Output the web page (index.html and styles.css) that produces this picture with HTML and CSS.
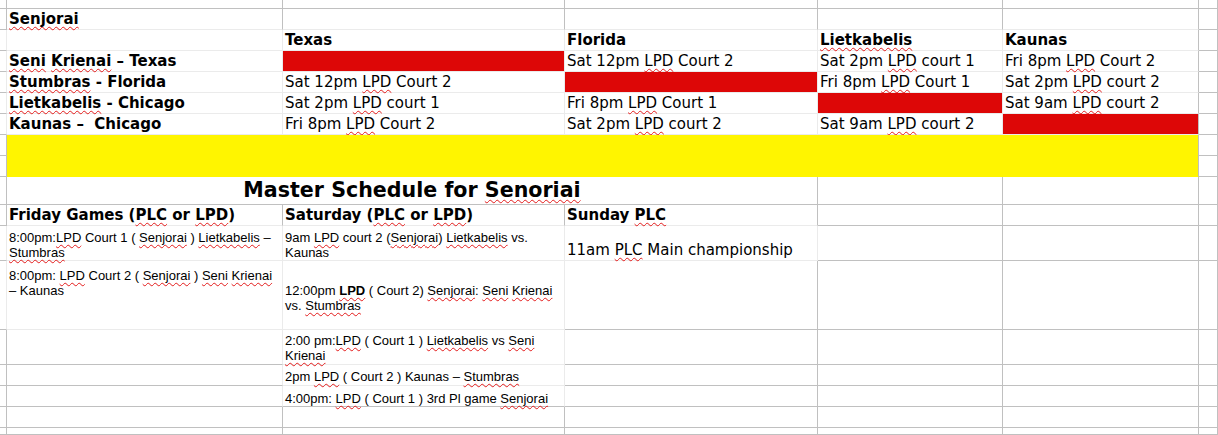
FILE: index.html
```html
<!DOCTYPE html>
<html>
<head>
<meta charset="utf-8">
<link rel="stylesheet" href="styles.css">
</head>
<body>
<div class="sheet">
  <!-- r0 -->
  <div class="c"></div><div class="c"></div><div class="c"></div><div class="c"></div><div class="c"></div><div class="c"></div><div class="c"></div>
  <!-- r1 -->
  <div class="c"></div>
  <div class="c lb b"><span class="sp">Senjorai</span></div>
  <div class="c lb"></div><div class="c lb"></div><div class="c lb"></div><div class="c lb"></div>
  <div class="c"></div>
  <!-- r2 -->
  <div class="c lr"></div>
  <div class="c lr lb"></div>
  <div class="c lr lb b">Texas</div>
  <div class="c lr lb b">Florida</div>
  <div class="c lr lb b"><span class="sp">Lietkabelis</span></div>
  <div class="c lb b">Kaunas</div>
  <div class="c"></div>
  <!-- r3 -->
  <div class="c lr"></div>
  <div class="c lr lb b"><span class="sp">Seni</span> <span class="sp">Krienai</span> – Texas</div>
  <div class="c lr lb red"></div>
  <div class="c lr lb">Sat 12pm <span class="sp">LPD</span> Court 2</div>
  <div class="c lr lb">Sat 2pm <span class="sp">LPD</span> court 1</div>
  <div class="c lb">Fri 8pm <span class="sp">LPD</span> Court 2</div>
  <div class="c"></div>
  <!-- r4 -->
  <div class="c lr"></div>
  <div class="c lr lb b"><span class="sp">Stumbras</span> - Florida</div>
  <div class="c lr lb">Sat 12pm <span class="sp">LPD</span> Court 2</div>
  <div class="c lr lb red"></div>
  <div class="c lr lb">Fri 8pm <span class="sp">LPD</span> Court 1</div>
  <div class="c lb">Sat 2pm <span class="sp">LPD</span> court 2</div>
  <div class="c"></div>
  <!-- r5 -->
  <div class="c lr"></div>
  <div class="c lr lb b"><span class="sp">Lietkabelis</span> - Chicago</div>
  <div class="c lr lb">Sat 2pm <span class="sp">LPD</span> court 1</div>
  <div class="c lr lb">Fri 8pm <span class="sp">LPD</span> Court 1</div>
  <div class="c lr lb red"></div>
  <div class="c lb">Sat 9am <span class="sp">LPD</span> court 2</div>
  <div class="c"></div>
  <!-- r6 -->
  <div class="c lr"></div>
  <div class="c lr lb b">Kaunas –&nbsp; Chicago</div>
  <div class="c lr lb">Fri 8pm <span class="sp">LPD</span> Court 2</div>
  <div class="c lr lb">Sat 2pm <span class="sp">LPD</span> court 2</div>
  <div class="c lr lb">Sat 9am <span class="sp">LPD</span> court 2</div>
  <div class="c lb red"></div>
  <div class="c"></div>
  <!-- r7 / r8 -->
  <div class="c"></div>
  <div class="c yellow"></div>
  <div class="c"></div>
  <div class="c"></div>
  <div class="c"></div>
  <!-- r9 -->
  <div class="c"></div>
  <div class="c title"><span>Master Schedule for <span class="sp">Senoriai</span></span></div>
  <div class="c"></div>
  <div class="c"></div>
  <div class="c"></div>
  <!-- r10 -->
  <div class="c"></div>
  <div class="c lb b">Friday Games (<span class="sp">PLC</span> or <span class="sp">LPD</span>)</div>
  <div class="c lb b">Saturday (<span class="sp">PLC</span> or <span class="sp">LPD</span>)</div>
  <div class="c lb b">Sunday <span class="sp">PLC</span></div>
  <div class="c"></div><div class="c"></div><div class="c"></div>
  <!-- r11 -->
  <div class="c lr"></div>
  <div class="c lr lb sm p4">8:00pm:<span class="sp">LPD</span> Court 1 ( <span class="sp">Senjorai</span> ) <span class="sp">Lietkabelis</span> –<br><span class="sp">Stumbras</span></div>
  <div class="c lr lb sm p4">9am <span class="sp">LPD</span> court 2 (<span class="sp">Senjorai</span>) <span class="sp">Lietkabelis</span> vs.<br>Kaunas</div>
  <div class="c lr lb end"><span>11am <span class="sp">PLC</span> Main championship</span></div>
  <div class="c"></div><div class="c"></div><div class="c"></div>
  <!-- r12 -->
  <div class="c lr"></div>
  <div class="c lr lb sm p7">8:00pm: <span class="sp">LPD</span> Court 2 ( <span class="sp">Senjorai</span> ) <span class="sp">Seni</span> <span class="sp">Krienai</span><br>– Kaunas</div>
  <div class="c lr lb sm p22">12:00pm <b class="sp">LPD</b> ( Court 2) <span class="sp">Senjorai</span>: <span class="sp">Seni</span> <span class="sp">Krienai</span><br>vs. <span class="sp">Stumbras</span></div>
  <div class="c"></div><div class="c"></div><div class="c"></div><div class="c"></div>
  <!-- r13 -->
  <div class="c"></div>
  <div class="c lr"></div>
  <div class="c lr lb sm p3">2:00 pm:<span class="sp">LPD</span> ( Court 1 ) <span class="sp">Lietkabelis</span> vs <span class="sp">Seni</span><br><span class="sp">Krienai</span></div>
  <div class="c"></div><div class="c"></div><div class="c"></div><div class="c"></div>
  <!-- r14 -->
  <div class="c"></div>
  <div class="c lr"></div>
  <div class="c lr lb sm p4">2pm <span class="sp">LPD</span> ( Court 2 ) Kaunas – <span class="sp">Stumbras</span></div>
  <div class="c"></div><div class="c"></div><div class="c"></div><div class="c"></div>
  <!-- r15 -->
  <div class="c"></div>
  <div class="c lr"></div>
  <div class="c lr sm p5">4:00pm: <span class="sp">LPD</span> ( Court 1 ) 3rd Pl game <span class="sp">Senjorai</span></div>
  <div class="c"></div><div class="c"></div><div class="c"></div><div class="c"></div>
  <!-- r16 -->
  <div class="c"></div><div class="c"></div><div class="c"></div><div class="c"></div><div class="c"></div><div class="c"></div><div class="c"></div>
  <!-- r17 -->
  <div class="c"></div><div class="c"></div><div class="c"></div><div class="c"></div><div class="c"></div><div class="c"></div><div class="c"></div>
</div>
</body>
</html>
```

FILE: styles.css
```css
html, body {
  margin: 0;
  padding: 0;
  background: #ffffff;
}

body {
  width: 1218px;
  height: 435px;
  overflow: hidden;
  font-family: "DejaVu Sans", sans-serif;
  font-size: 15px;
  color: #000000;
}

.sheet {
  display: grid;
  grid-template-columns: 7px 276px 282px 253px 185px 196px 19px;
  grid-template-rows: 9px 21px 21px 21px 21px 21px 21px 21px 21px 28px 21px 35px 69px 35px 21px 21px 21px 7px;
  width: 1218px;
  height: 435px;
}

.c {
  box-sizing: border-box;
  border-right: 1px solid #c0c0c0;
  border-bottom: 1px solid #c0c0c0;
  padding-left: 2px;
  line-height: 20px;
  white-space: nowrap;
  overflow: visible;
  min-width: 0;
}

.lr {
  border-right-color: #ebebeb;
}

.lb {
  border-bottom-color: #ebebeb;
}

.b {
  font-weight: bold;
}

.red {
  background: #dd0707;
}

.yellow {
  grid-column: span 5;
  grid-row: span 2;
  background: #fff500;
  border-right-color: #c0c0c0;
  border-bottom-color: #fff500;
}

.title {
  grid-column: span 3;
  display: flex;
  justify-content: center;
  font-weight: bold;
  font-size: 20.6px;
  line-height: 27px;
  padding-left: 0;
}

.sm {
  font-family: "Liberation Sans", Arial, sans-serif;
  font-size: 13px;
  line-height: 15px;
}

.p3 { padding-top: 3px; }
.p4 { padding-top: 4px; }
.p5 { padding-top: 5px; }
.p7 { padding-top: 7px; }
.p22 { padding-top: 22px; }

.end {
  display: flex;
  align-items: flex-end;
}

.sp {
  text-decoration-line: underline;
  text-decoration-style: wavy;
  text-decoration-color: #e31b1b;
  text-decoration-thickness: 1px;
  text-underline-offset: 2px;
  text-decoration-skip-ink: none;
}
```
